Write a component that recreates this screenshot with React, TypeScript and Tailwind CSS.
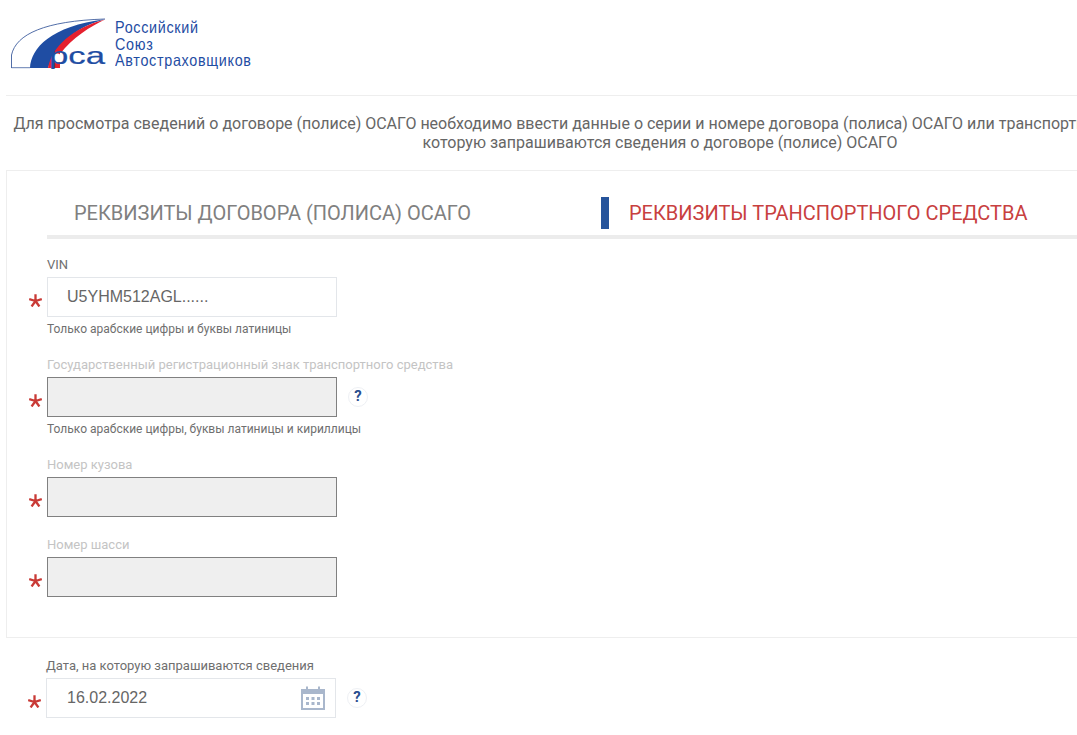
const font = { fontFamily: 'Roboto, "Noto Sans", sans-serif' };
const arial = { fontFamily: '"Liberation Sans", Arial, sans-serif' };

function Star() {
  return (
    <svg width="13" height="13" viewBox="0 0 13 13" className="shrink-0">
      <path d="M6.5 7 L6.5 0.3 M6.5 7 L12.8 5 M6.5 7 L10.4 12.5 M6.5 7 L2.6 12.5 M6.5 7 L0.2 5" stroke="#c93a36" strokeWidth="2.3" fill="none" />
    </svg>
  );
}

function Help() {
  return (
    <div className="w-[20px] h-[20px] rounded-full border border-[#eef0f4] bg-white flex items-center justify-center text-[15px] font-bold text-[#2a4f8f] leading-none">
      ?
    </div>
  );
}

function Field({ label, muted, value, disabled, hint, help, mb }: { label: string; muted?: boolean; value?: string; disabled?: boolean; hint?: string; help?: boolean; mb: string }) {
  return (
    <div className={mb}>
      <div className={`text-[13px] leading-[15px] h-[15px] mb-[5px] ml-[47px] ${muted ? 'text-[#c4c4c4]' : 'text-[#6f6f6f]'}`}>{label}</div>
      <div className="flex items-center">
        <div className="w-[47px] pt-[7px] pr-[5px] flex justify-end">
          <Star />
        </div>
        <div
          className={`w-[290px] h-[40px] flex items-center pl-[19px] text-[16px] text-[#666] border ${disabled ? 'bg-[#efefef] border-[#808080]' : 'bg-white border-[#e3e6ea]'}`}
          style={arial}
        >
          {value}
        </div>
        {help && <div className="ml-[11px] -mt-[1px]"><Help /></div>}
      </div>
      {hint && <div className="ml-[47px] mt-[5px] text-[12px] leading-[14px] text-[#6f6f6f]">{hint}</div>}
    </div>
  );
}

function Logo() {
  return (
    <div className="flex items-start">
      <svg width="100" height="52" viewBox="0 0 100 52" className="shrink-0 mt-[18px]">
        <path d="M0.5 50 V37 C5 16 34 3 94 1" fill="none" stroke="#3e5e9e" strokeWidth="0.9" />
        <path d="M0.5 49.7 H19" stroke="#3e5e9e" strokeWidth="0.8" />
        <path d="M19 50 C20 30 40 8 94 1.2 C68 8 46 24 37 50 Z" fill="#1f4da3" />
        <path d="M37 50 C41 28 62 10 94 1.5 C80 8 61 20 49 36 V50 Z" fill="#e5202e" />
        <ellipse cx="46" cy="40" rx="5" ry="4.5" fill="#ffffff" />
        <rect x="49" y="34" width="4" height="16" fill="#ffffff" />
        <text x="38" y="46" fontFamily="'Liberation Sans', sans-serif" fontSize="24" fill="#1f4da3" stroke="#1f4da3" strokeWidth="0.2" textLength="56" lengthAdjust="spacingAndGlyphs">рса</text>
      </svg>
      <div className="mt-[19px] ml-[4px] text-[16.5px] leading-[16.5px] tracking-[0.8px] text-[#1f4da3]" style={arial}>
        <div className="origin-left scale-x-[0.87] whitespace-nowrap">Российский</div>
        <div className="origin-left scale-x-[0.87] whitespace-nowrap">Союз</div>
        <div className="origin-left scale-x-[0.87] whitespace-nowrap">Автостраховщиков</div>
      </div>
    </div>
  );
}

export default function App() {
  return (
    <div className="w-[1077px] h-[735px] overflow-hidden bg-white" style={font}>
      <div className="w-[1320px]">
        <div className="h-[96px] pl-[11px] relative">
          <Logo />
          <div className="absolute left-[6px] right-0 top-[95px] h-px bg-[#eeeeee]" />
        </div>
        <p className="w-[1308px] ml-[6px] mt-[18px] text-center text-[16px] leading-[19px] text-[#666]">
          Для просмотра сведений о договоре (полисе) ОСАГО необходимо ввести данные о серии и номере договора (полиса) ОСАГО или транспортном средстве, а также дату, на
          <br />
          которую запрашиваются сведения о договоре (полисе) ОСАГО
        </p>
        <div className="ml-[6px] mt-[18px] h-[468px] border border-[#eeeeee] pt-[26px] w-[1310px] -mb-px">
          <div className="ml-[40px] border-b-4 border-[#ececec] h-[42px] flex">
            <div className="w-[554px] pl-[27px] h-[32px] flex items-center text-[20px] text-[#808080] whitespace-nowrap">РЕКВИЗИТЫ ДОГОВОРА (ПОЛИСА) ОСАГО</div>
            <div className="h-[32px] border-l-[8px] border-[#26549b] pl-[20px] flex items-center text-[20px] text-[#c8403f] whitespace-nowrap">РЕКВИЗИТЫ ТРАНСПОРТНОГО СРЕДСТВА</div>
          </div>
          <div className="-ml-[7px] pt-[18px]">
            <Field label="VIN" value="U5YHM512AGL......" hint="Только арабские цифры и буквы латиницы" mb="mb-[21px]" />
            <Field label="Государственный регистрационный знак транспортного средства" muted disabled help hint="Только арабские цифры, буквы латиницы и кириллицы" mb="mb-[21px]" />
            <Field label="Номер кузова" muted disabled mb="mb-[20px]" />
            <Field label="Номер шасси" muted disabled mb="" />
          </div>
        </div>
        <div className="mt-[21px]">
          <div className="text-[13px] leading-[15px] h-[15px] mb-[5px] ml-[46px] text-[#6f6f6f]">Дата, на которую запрашиваются сведения</div>
          <div className="flex items-center">
            <div className="w-[46px] pt-[7px] pr-[5px] flex justify-end"><Star /></div>
            <div className="w-[290px] h-[40px] flex items-center justify-between pl-[20px] pr-[10px] text-[16px] text-[#666] bg-white border border-[#e3e6ea]" style={arial}>
              16.02.2022
              <svg width="24" height="24" viewBox="0 0 24 24">
                <path d="M1 4 H23 V23 H1 Z" fill="none" stroke="#a9b7cc" strokeWidth="2" />
                <rect x="1" y="3" width="22" height="5" fill="#a9b7cc" />
                <rect x="5" y="0.5" width="2" height="4" fill="#a9b7cc" />
                <rect x="17" y="0.5" width="2" height="4" fill="#a9b7cc" />
                <path d="M5 11 h3 v3 h-3z M10.5 11 h3 v3 h-3z M16 11 h3 v3 h-3z M5 16 h3 v3 h-3z M10.5 16 h3 v3 h-3z M16 16 h3 v3 h-3z" fill="#a9b7cc" />
              </svg>
            </div>
            <div className="ml-[11px] -mt-[1px]"><Help /></div>
          </div>
        </div>
      </div>
    </div>
  );
}
